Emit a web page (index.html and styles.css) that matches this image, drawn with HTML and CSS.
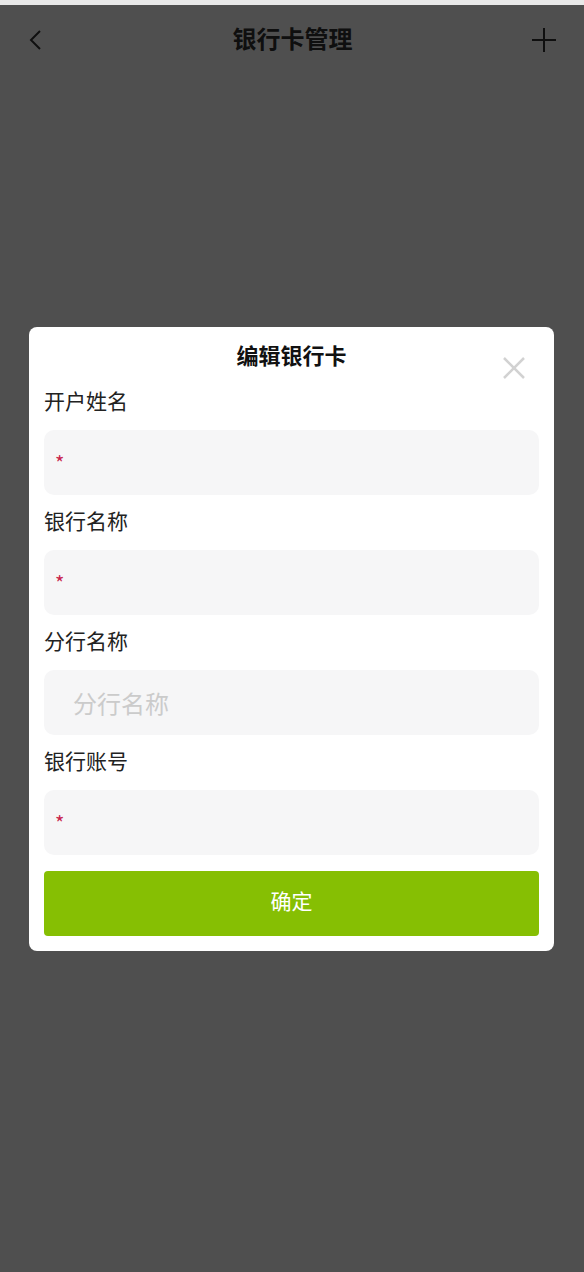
FILE: index.html
```html
<!DOCTYPE html>
<html lang="zh-CN">
  <head>
    <meta charset="UTF-8" />
    <meta name="viewport" content="width=device-width, initial-scale=1.0" />
    <title>银行卡管理</title>
    <link rel="stylesheet" href="styles.css">
  </head>
  <body>
    <div class="status-strip"></div>
    <div class="nav-bar">
      <span class="nav-btn">
        <svg width="14" height="22" viewBox="0 0 14 22">
          <path d="M11 2 L2 11 L11 20" fill="none" stroke="#333" stroke-width="2" />
        </svg>
      </span>
      <h1 class="nav-title">银行卡管理</h1>
      <span class="nav-btn nav-btn-right">
        <svg width="24" height="24" viewBox="0 0 24 24">
          <path d="M12 0 V24 M0 12 H24" fill="none" stroke="#333" stroke-width="2" />
        </svg>
      </span>
    </div>

    <div class="mask">
      <div class="dialog">
        <div class="dialog-head">
          <h2 class="dialog-title">编辑银行卡</h2>
          <span class="dialog-close">
            <svg width="22" height="22" viewBox="0 0 22 22">
              <path d="M1 1 L21 21 M21 1 L1 21" fill="none" stroke="#d2d2d2" stroke-width="2.5" />
            </svg>
          </span>
        </div>

        <div class="field">
          <label class="field-label">开户姓名</label>
          <div class="field-box">
            <span class="required">*</span>
            <input class="field-input" type="text" />
          </div>
        </div>

        <div class="field">
          <label class="field-label">银行名称</label>
          <div class="field-box">
            <span class="required">*</span>
            <input class="field-input" type="text" />
          </div>
        </div>

        <div class="field">
          <label class="field-label">分行名称</label>
          <div class="field-box">
            <span class="required"></span>
            <input class="field-input" type="text" placeholder="分行名称" />
          </div>
        </div>

        <div class="field">
          <label class="field-label">银行账号</label>
          <div class="field-box">
            <span class="required">*</span>
            <input class="field-input" type="text" />
          </div>
        </div>

        <button class="submit-btn">确定</button>
      </div>
    </div>
  </body>
</html>
```

FILE: styles.css
```css
body {
  margin: 0;
  background: #fff;
  font-family: "Noto Sans CJK SC", "Noto Sans", sans-serif;
  color: #333;
}

.status-strip {
  height: 5px;
  background: #e8e8e8;
}

.nav-bar {
  height: 70px;
  display: flex;
  align-items: center;
  padding: 0 28px 0 29px;
}

.nav-btn {
  width: 60px;
  display: flex;
  align-items: center;
}

.nav-btn-right {
  justify-content: flex-end;
}

.nav-title {
  flex: 1;
  margin: 0 0 6px;
  text-align: center;
  font-size: 24px;
  font-weight: bold;
  color: #333;
}

.mask {
  position: fixed;
  top: 5px;
  left: 0;
  right: 0;
  bottom: 0;
  background: rgba(0, 0, 0, 0.69);
  display: flex;
  align-items: center;
  justify-content: center;
}

.dialog {
  width: 495px;
  padding: 13px 15px 15px;
  margin-right: 1px;
  background: #fff;
  border-radius: 8px;
}

.dialog-head {
  position: relative;
  height: 35px;
  text-align: center;
}

.dialog-title {
  margin: 0;
  font-size: 22px;
  line-height: 28px;
  font-weight: bold;
  color: #111;
}

.dialog-close {
  position: absolute;
  right: 14px;
  top: 17px;
  display: flex;
}

.field {
  margin-top: 11px;
}

.field-label {
  display: block;
  height: 35px;
  line-height: 29px;
  font-size: 21px;
  color: #222;
  margin-bottom: 9px;
}

.field-box {
  height: 65px;
  display: flex;
  align-items: center;
  padding-left: 11px;
  background: #f6f6f7;
  border-radius: 10px;
}

.required {
  width: 18px;
  flex: none;
  color: #c8254c;
  font-size: 20px;
  line-height: 20px;
  margin-top: 2px;
}

.field-input {
  flex: 1;
  min-width: 0;
  border: none;
  outline: none;
  background: transparent;
  font-family: inherit;
  font-size: 24px;
  color: #333;
  padding: 0;
}

.field-input::placeholder {
  color: #cbcbcb;
}

.submit-btn {
  display: block;
  width: 100%;
  height: 65px;
  margin-top: 16px;
  padding: 0 0 6px;
  border: none;
  border-radius: 4px;
  background: #86bf03;
  color: #fff;
  font-family: inherit;
  font-size: 21px;
  cursor: pointer;
}
```
